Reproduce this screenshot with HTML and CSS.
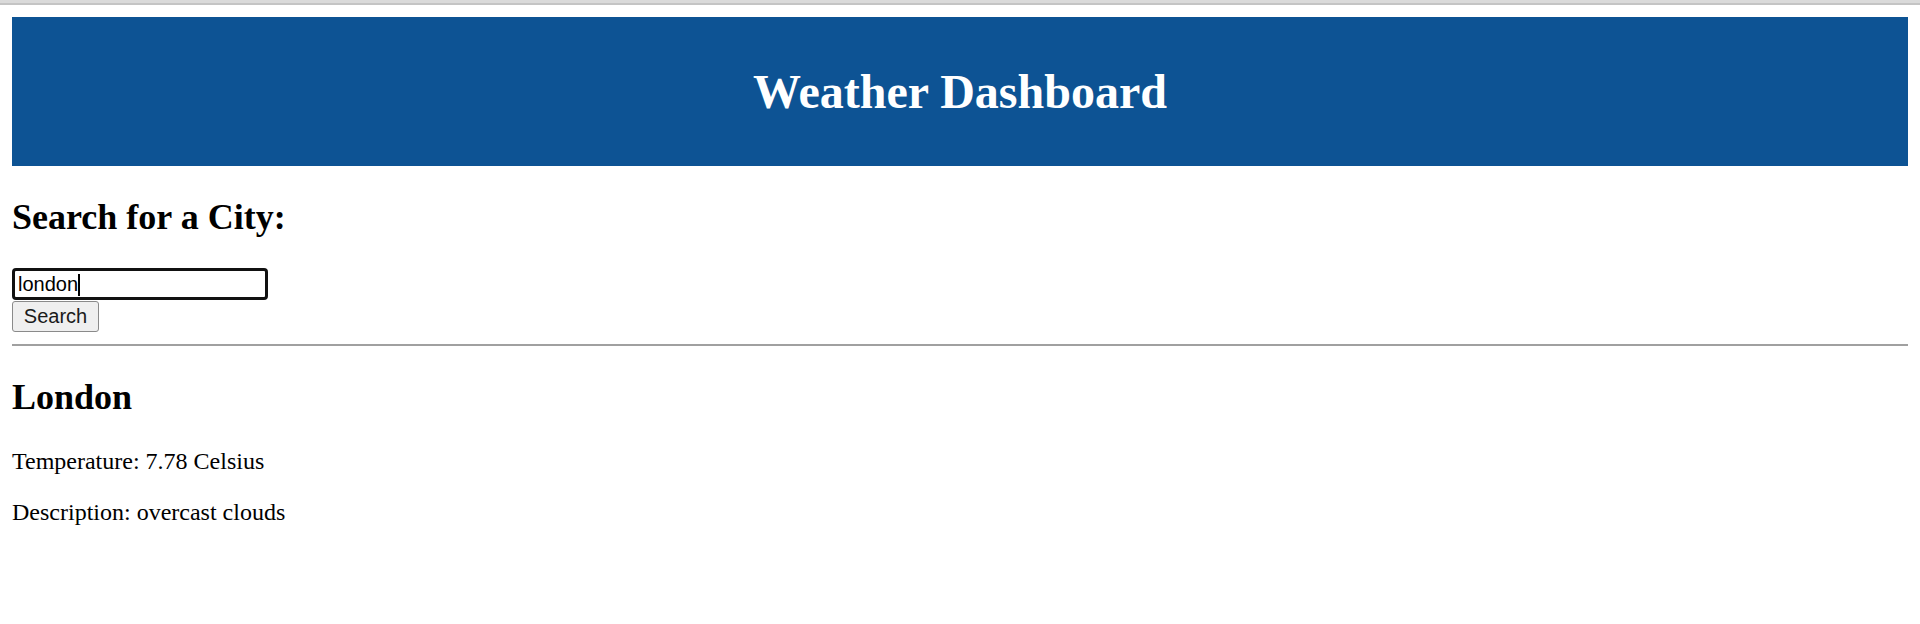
FILE: index.html
```html
<!DOCTYPE html>
<html lang="en">
<head>
<meta charset="utf-8">
<title>Weather Dashboard</title>
<link rel="stylesheet" href="styles.css">
</head>
<body>
<div class="chrome"></div>
<div class="page">
  <header class="masthead">
    <h1 class="title">Weather Dashboard</h1>
  </header>
  <section class="search">
    <h2 class="heading">Search for a City:</h2>
    <div class="input-wrap">
      <input class="city-input" type="text" value="london">
      <span class="caret"></span>
    </div>
    <button class="search-btn" type="button">Search</button>
  </section>
  <hr class="divider">
  <section class="result">
    <h2 class="heading">London</h2>
    <p class="line">Temperature: 7.78 Celsius</p>
    <p class="line">Description: overcast clouds</p>
  </section>
</div>
</body>
</html>
```
FILE: styles.css
```css
html, body {
  margin: 0;
  padding: 0;
  background: #ffffff;
}
body {
  font-family: "Liberation Serif", "Times New Roman", serif;
  font-size: 24px;
  color: #000;
}
.chrome {
  height: 3px;
  background: #dadada;
  border-bottom: 2px solid #c4c4c4;
}
.page {
  padding: 12px 12px 0 12px;
}
.masthead {
  background: #0d5394;
  padding: 15px;
  text-align: center;
}
.title {
  margin: 32px 0;
  font-size: 48px;
  font-weight: bold;
  color: #ffffff;
  line-height: normal;
}
.heading {
  font-size: 36px;
  font-weight: bold;
  margin: 30px 0;
  line-height: normal;
}
.input-wrap {
  position: relative;
  width: 256px;
  height: 32px;
}
.city-input {
  display: block;
  box-sizing: border-box;
  width: 256px;
  height: 32px;
  margin: 0;
  padding: 0 3px;
  border: 3px solid #111111;
  border-radius: 4px;
  outline: none;
  font-family: "Liberation Sans", Arial, sans-serif;
  font-size: 20px;
  color: #000;
  background: #fff;
}
.caret {
  position: absolute;
  left: 66px;
  top: 6px;
  width: 2px;
  height: 22px;
  background: #000;
}
.search-btn {
  display: block;
  box-sizing: border-box;
  width: 87px;
  height: 31px;
  margin: 1px 0 0 0;
  padding: 0;
  border: 1px solid #8a8a8a;
  border-radius: 3px;
  background: #efefef;
  font-family: "Liberation Sans", Arial, sans-serif;
  font-size: 20px;
  color: #1a1a1a;
}
.divider {
  margin: 12px 0 0 0;
  height: 0;
  border: 0;
  border-top: 2px solid #a0a0a0;
}
.line {
  margin: 24px 0;
  line-height: normal;
}
```
